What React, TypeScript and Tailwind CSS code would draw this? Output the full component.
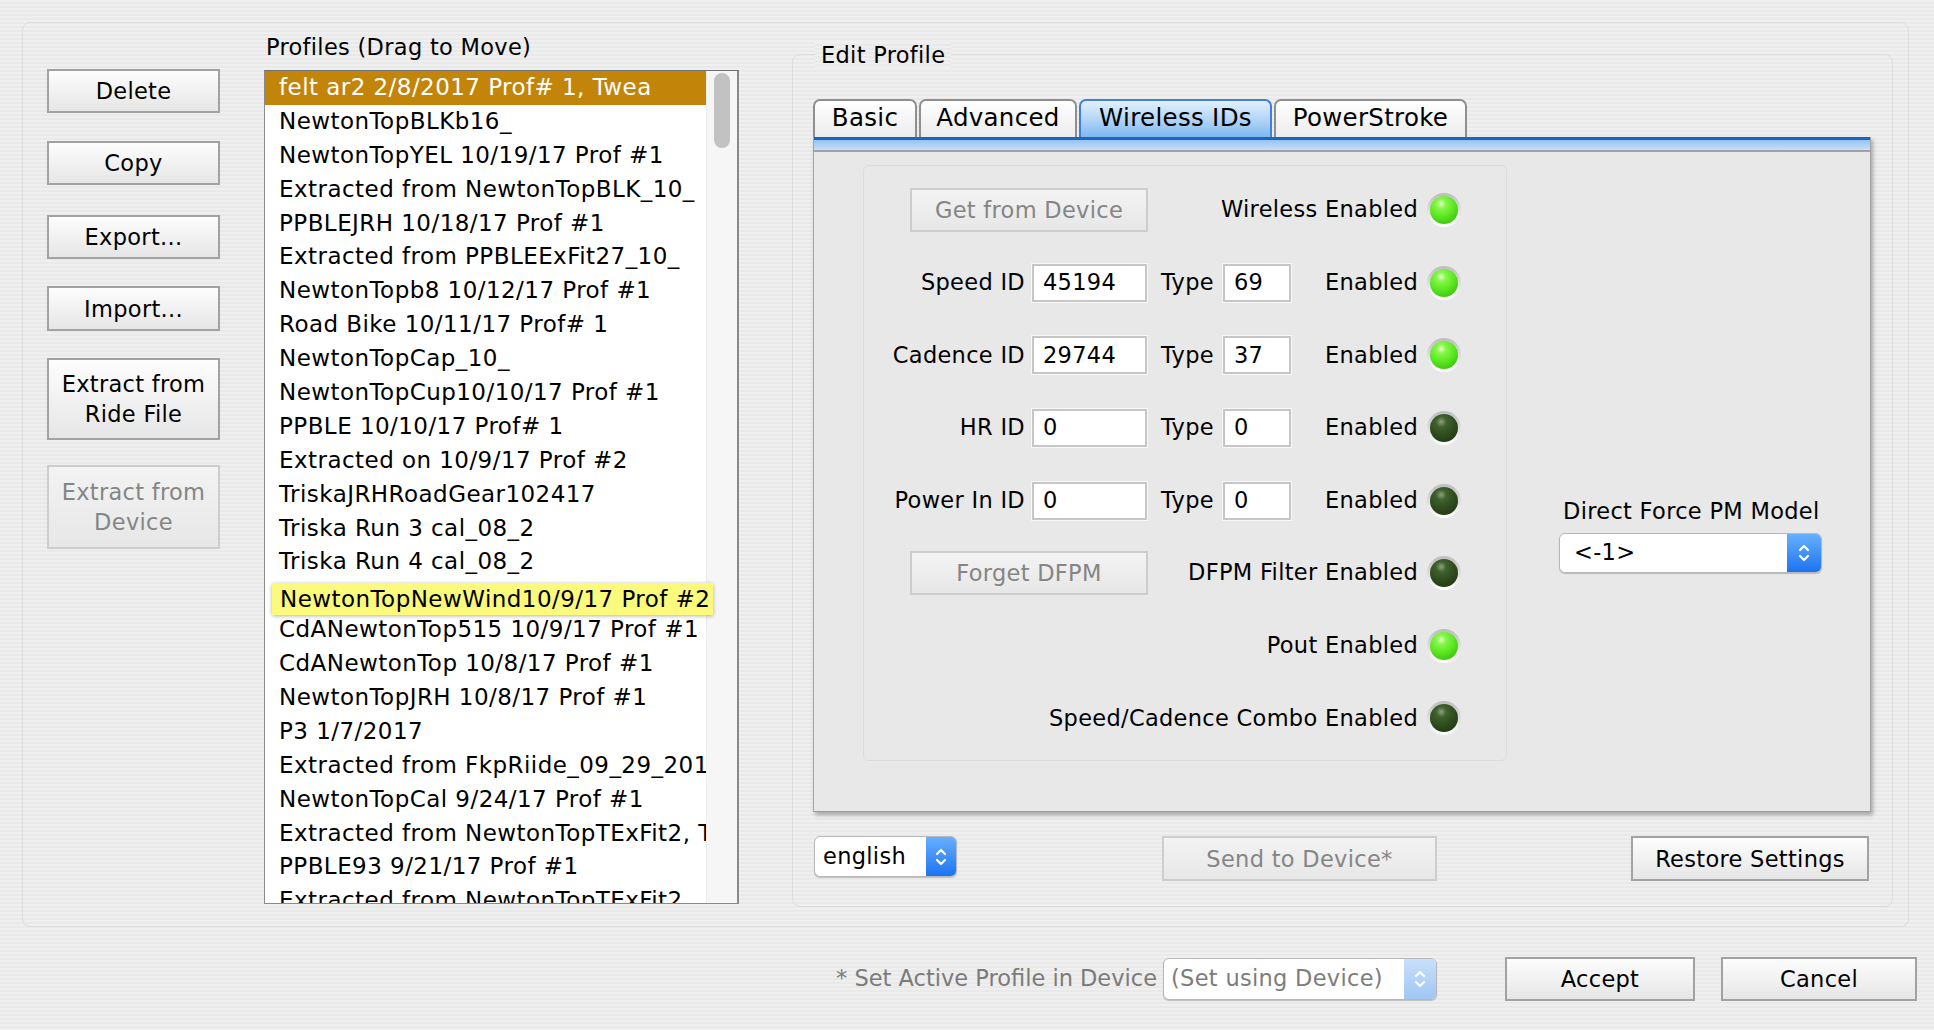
import React from "react";

const profiles = [
  "felt ar2 2/8/2017 Prof# 1, Twea",
  "NewtonTopBLKb16_",
  "NewtonTopYEL 10/19/17 Prof #1",
  "Extracted from NewtonTopBLK_10_",
  "PPBLEJRH 10/18/17 Prof #1",
  "Extracted from PPBLEExFit27_10_",
  "NewtonTopb8 10/12/17 Prof #1",
  "Road Bike 10/11/17 Prof# 1",
  "NewtonTopCap_10_",
  "NewtonTopCup10/10/17 Prof #1",
  "PPBLE 10/10/17 Prof# 1",
  "Extracted on 10/9/17 Prof #2",
  "TriskaJRHRoadGear102417",
  "Triska Run 3 cal_08_2",
  "Triska Run 4 cal_08_2",
  "NewtonTopNewWind10/9/17 Prof #2",
  "CdANewtonTop515 10/9/17 Prof #1",
  "CdANewtonTop 10/8/17 Prof #1",
  "NewtonTopJRH 10/8/17 Prof #1",
  "P3 1/7/2017",
  "Extracted from FkpRiide_09_29_2017",
  "NewtonTopCal 9/24/17 Prof #1",
  "Extracted from NewtonTopTExFit2, Twea",
  "PPBLE93 9/21/17 Prof #1",
  "Extracted from NewtonTopTExFit2",
];

function Btn({
  children,
  className = "",
  disabled = false,
}: {
  children: React.ReactNode;
  className?: string;
  disabled?: boolean;
}) {
  return (
    <div
      className={`flex items-center justify-center text-center leading-[26px] border-2 bg-linear-to-b ${
        disabled
          ? "border-[#cdcdcd] text-[#858585] from-[#f3f3f3] to-[#e7e7e7]"
          : "border-[#a2a2a2] text-black from-[#fdfdfd] to-[#e6e6e6]"
      } ${className}`}
    >
      {children}
    </div>
  );
}

function Led({ on }: { on: boolean }) {
  return (
    <div className="w-[34px] h-[34px] shrink-0 rounded-full p-[3px] bg-linear-to-b from-[#bdbdbd] to-[#ffffff]">
      <div
        className={`w-full h-full rounded-full ${
          on
            ? "bg-[radial-gradient(circle_at_40%_28%,#e4ffc8_0%,#86f74a_18%,#5ae621_50%,#3cc00e_85%,#2f9a08_100%)]"
            : "bg-[radial-gradient(circle_at_40%_28%,#8ca27e_0%,#40602e_20%,#2c4a1c_55%,#1b3010_100%)]"
        }`}
      />
    </div>
  );
}

function Stepper({ disabled = false, w }: { disabled?: boolean; w: string }) {
  return (
    <div
      className={`h-full ${w} shrink-0 flex items-center justify-center bg-linear-to-b ${
        disabled ? "from-[#c9e0fa] to-[#9fc6f3]" : "from-[#66afff] to-[#1b72f0]"
      }`}
    >
      <svg width="14" height="24" viewBox="0 0 14 24" fill="none" stroke="white" strokeWidth="2.2" strokeLinecap="round" strokeLinejoin="round">
        <path d="M3 9 L7 5 L11 9" />
        <path d="M3 15 L7 19 L11 15" />
      </svg>
    </div>
  );
}

function Select({
  text,
  className = "",
  stepW,
  disabled = false,
  pl = "pl-[10px]",
}: {
  text: string;
  className?: string;
  stepW: string;
  disabled?: boolean;
  pl?: string;
}) {
  return (
    <div
      className={`flex items-stretch rounded-[6px] overflow-hidden border border-[#b8b8b8] bg-white shadow-[0_1px_1px_rgba(0,0,0,0.2)] ${className}`}
    >
      <div className={`flex-1 flex items-center ${pl} whitespace-nowrap ${disabled ? "text-[#7d7d7d]" : "text-black"}`}>
        {text}
      </div>
      <Stepper w={stepW} disabled={disabled} />
    </div>
  );
}

function Field({ value, w }: { value: string; w: string }) {
  return (
    <div className={`h-[38px] ${w} bg-white border-2 border-[#c6c6c6] ring-1 ring-[#f8f8f8] flex items-center pl-[9px] text-black`}>
      {value}
    </div>
  );
}

function IdRow({ label, id, type, on }: { label: string; id: string; type: string; on: boolean }) {
  return (
    <div className="h-[72.6px] flex items-center">
      <div className="w-[161px] text-right whitespace-nowrap">{label}</div>
      <div className="ml-[7px]">
        <Field value={id} w="w-[115px]" />
      </div>
      <div className="ml-[14px] w-[56px]">Type</div>
      <div className="ml-[6px]">
        <Field value={type} w="w-[68px]" />
      </div>
      <div className="flex-1 text-right">Enabled</div>
      <div className="ml-[9px]">
        <Led on={on} />
      </div>
    </div>
  );
}

function LabelRow({ label, on, button }: { label: string; on: boolean; button?: string }) {
  return (
    <div className="h-[72.6px] flex items-center">
      {button ? (
        <Btn disabled className="ml-[46px] w-[238px] h-[44px]">
          {button}
        </Btn>
      ) : null}
      <div className="flex-1 text-right whitespace-nowrap">{label}</div>
      <div className="ml-[9px]">
        <Led on={on} />
      </div>
    </div>
  );
}

function Tab({ children, w, active = false }: { children: React.ReactNode; w: string; active?: boolean }) {
  return (
    <div
      className={`${w} h-[38px] rounded-t-[7px] border-2 border-b-0 flex items-center justify-center text-[24.5px] pb-[2px] bg-linear-to-b ${
        active
          ? "border-[#3f80d8] from-[#e2f0fd] via-[#b4d6f8] to-[#7db7f0]"
          : "border-[#8f8f8f] from-[#ffffff] to-[#ececec]"
      }`}
    >
      {children}
    </div>
  );
}

export default function App() {
  return (
    <div className="w-[1934px] h-[1030px] overflow-hidden pt-[22px] pl-[22px] bg-fixed bg-[repeating-linear-gradient(to_bottom,#efefef_0px,#efefef_2px,#e9e9e9_2px,#e9e9e9_4px)] font-['DejaVu_Sans',sans-serif] text-[22.5px] tracking-[0.3px] text-black">
      {/* Outer group */}
      <div className="w-[1887px] h-[905px] border border-[#dddddd] rounded-[8px] flex items-start">
        {/* Left buttons */}
        <div className="ml-[24px] mt-[46px] w-[173px] flex flex-col">
          <Btn className="h-[44px]">Delete</Btn>
          <Btn className="h-[44px] mt-[28px]">Copy</Btn>
          <Btn className="h-[44px] mt-[30px]">Export...</Btn>
          <Btn className="h-[45px] mt-[27px]">Import...</Btn>
          <Btn className="h-[82px] mt-[27px] leading-[30px]">
            Extract from
            <br />
            Ride File
          </Btn>
          <Btn disabled className="h-[84px] mt-[25px] leading-[30px]">
            Extract from
            <br />
            Device
          </Btn>
        </div>

        {/* Profiles list */}
        <div className="ml-[44px] mt-[11px] w-[475px] flex flex-col">
          <div className="h-[26px] leading-[26px] pl-[2px] whitespace-nowrap">Profiles (Drag to Move)</div>
          <div className="relative mt-[10px] h-[834px] bg-white border border-[#8a8a8a] border-t-[#6f6f6f] border-r-2 border-r-[#8a8a8a] flex">
            <div className="w-[441px] overflow-hidden text-[23px] tracking-[0.45px]">
              {profiles.map((p, i) => (
                <div
                  key={i}
                  className={`h-[33.9px] leading-[33.9px] pl-[14px] whitespace-nowrap overflow-hidden ${
                    i === 0 ? "bg-[#c3840a] text-white" : "text-black"
                  }`}
                >
                  {p}
                </div>
              ))}
            </div>
            <div className="w-[31px] h-full bg-[#f6f6f6] border-l border-[#ececec] flex justify-center pt-[2px]">
              <div className="w-[16px] h-[75px] rounded-full bg-[#c2c2c2]" />
            </div>
            {/* drag tooltip */}
            <div className="absolute left-[7px] top-[512px] w-[441px] h-[32px] leading-[32px] pl-[8px] bg-[#fbfa7c] text-[23px] tracking-[0.45px] text-black whitespace-nowrap overflow-hidden shadow-[0_1px_4px_rgba(0,0,0,0.3)]">
              NewtonTopNewWind10/9/17 Prof #2
            </div>
          </div>
        </div>

        {/* Edit Profile group */}
        <div className="relative ml-[53px] mt-[31px] w-[1101px] h-[853px] border border-[#dcdcdc] rounded-[8px]">
          <div className="absolute top-0 left-[22px] -translate-y-1/2 px-[6px] leading-[26px] bg-fixed bg-[repeating-linear-gradient(to_bottom,#efefef_0px,#efefef_2px,#e9e9e9_2px,#e9e9e9_4px)]">
            Edit Profile
          </div>

          {/* Tabs */}
          <div className="ml-[20px] mt-[44px] flex items-end gap-[2px]">
            <Tab w="w-[104px]">Basic</Tab>
            <Tab w="w-[158px]">Advanced</Tab>
            <Tab w="w-[193px]" active>
              Wireless IDs
            </Tab>
            <Tab w="w-[193px]">PowerStroke</Tab>
          </div>

          {/* Tab panel */}
          <div className="ml-[20px] w-[1058px] h-[675px] flex flex-col bg-[#e8e8e8] border-x border-b border-x-[#a5a5a5] border-b-[#9a9a9a] shadow-[2px_3px_4px_rgba(0,0,0,0.3)]">
            <div className="h-[15px] shrink-0 border-t-[3px] border-t-[#1b64c6] border-b-2 border-b-[#a2a2a2] bg-linear-to-b from-[#93c3f2] to-[#c6e0fa]" />
            <div className="flex items-start">
              {/* inner box */}
              <div className="ml-[49px] mt-[13px] w-[644px] h-[596px] border border-[#dcdcdc] rounded-[6px] pt-[8px] pr-[45px] flex flex-col">
                <LabelRow label="Wireless Enabled" on button="Get from Device" />
                <IdRow label="Speed ID" id="45194" type="69" on />
                <IdRow label="Cadence ID" id="29744" type="37" on />
                <IdRow label="HR ID" id="0" type="0" on={false} />
                <IdRow label="Power In ID" id="0" type="0" on={false} />
                <LabelRow label="DFPM Filter Enabled" on={false} button="Forget DFPM" />
                <LabelRow label="Pout Enabled" on />
                <LabelRow label="Speed/Cadence Combo Enabled" on={false} />
              </div>
              {/* Direct Force */}
              <div className="ml-[52px] mt-[346px] flex flex-col">
                <div className="pl-[4px] leading-[26px] whitespace-nowrap">Direct Force PM Model</div>
                <Select text="<-1>" className="mt-[9px] w-[263px] h-[40px]" stepW="w-[34px]" pl="pl-[14px]" />
              </div>
            </div>
          </div>

          {/* bottom row of edit group */}
          <div className="ml-[21px] mt-[24px] flex items-start">
            <Select text="english" className="w-[143px] h-[41px]" stepW="w-[30px]" pl="pl-[8px]" />
            <Btn disabled className="ml-[205px] w-[275px] h-[45px]">
              Send to Device*
            </Btn>
            <Btn className="ml-[194px] w-[238px] h-[45px]">Restore Settings</Btn>
          </div>
        </div>
      </div>

      {/* bottom row */}
      <div className="mt-[30px] h-[44px] pr-[17px] flex items-center justify-end">
        <div className="text-[#7b7b7b] whitespace-nowrap tracking-normal">* Set Active Profile in Device</div>
        <Select text="(Set using Device)" disabled className="ml-[6px] w-[274px] h-[42px]" stepW="w-[32px]" pl="pl-[7px]" />
        <Btn className="ml-[68px] w-[190px] h-[44px]">Accept</Btn>
        <Btn className="ml-[26px] w-[196px] h-[44px]">Cancel</Btn>
      </div>
    </div>
  );
}
